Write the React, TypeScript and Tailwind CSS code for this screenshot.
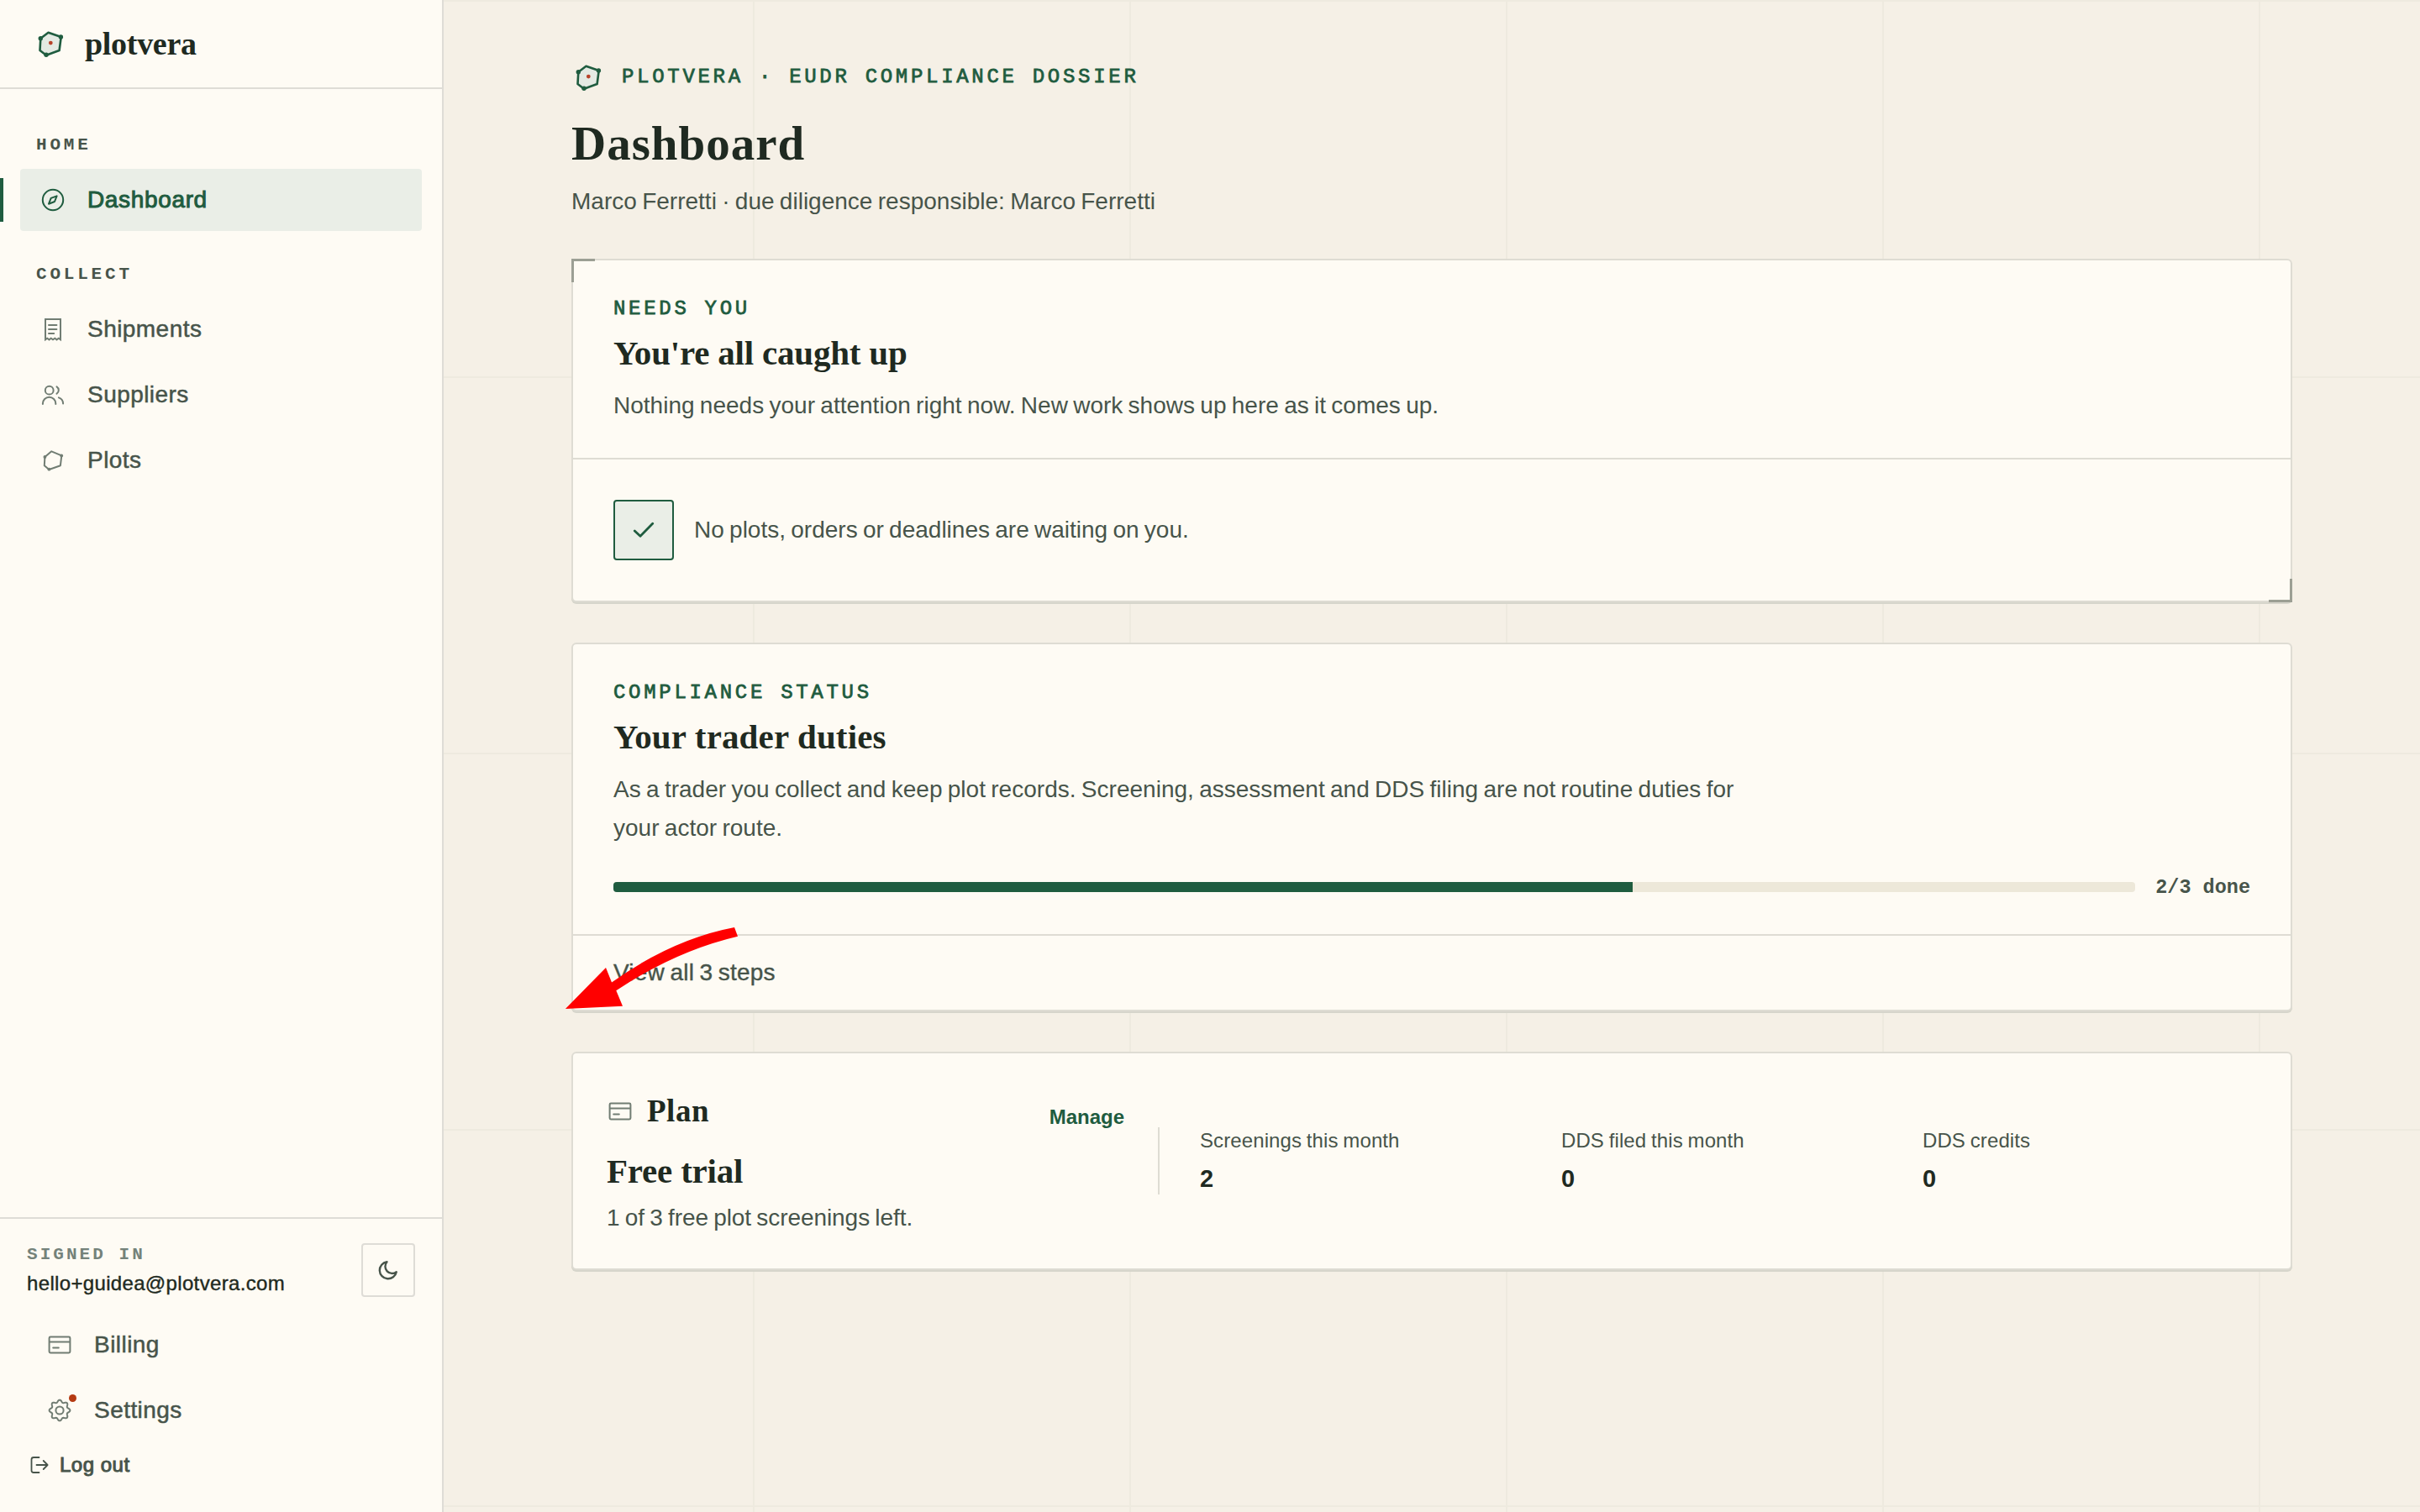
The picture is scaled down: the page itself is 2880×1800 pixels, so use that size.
import type { ReactNode } from "react";

function Logo() {
  return (
    <svg viewBox="0 0 32 32" className="size-8 shrink-0">
      <path
        d="M13.5 2.7 28.7 8 26.6 24 11 29.7 3.5 24 4.3 9.7Z"
        fill="#e4eae3"
        stroke="#1f5c3f"
        strokeWidth="2.6"
        strokeLinejoin="round"
      />
      <circle cx="4.3" cy="9.7" r="2.7" fill="#1f5c3f" />
      <circle cx="28.4" cy="8" r="2.7" fill="#1f5c3f" />
      <circle cx="11" cy="29.2" r="2.7" fill="#1f5c3f" />
      <circle cx="16.3" cy="15.1" r="2.4" fill="#b8432a" />
    </svg>
  );
}

function Icon({ children, className = "" }: { children: ReactNode; className?: string }) {
  return (
    <svg
      viewBox="0 0 32 32"
      fill="none"
      stroke="currentColor"
      strokeWidth="2"
      strokeLinecap="round"
      strokeLinejoin="round"
      className={`size-8 shrink-0 ${className}`}
    >
      {children}
    </svg>
  );
}

const CompassIcon = () => (
  <>
    <circle cx="16" cy="16" r="12.2" />
    <path d="M20.6 11.4 18 18 11 20.7 13.7 13.9Z" />
  </>
);

const ReceiptIcon = () => (
  <path
    d="M7 28.4V3.9h18v24.5l-2.2-1.6-2.3 1.6-2.2-1.6-2.3 1.6-2.3-1.6-2.2 1.6-2.3-1.6ZM11 11.1h9.4M11 15.9h9.4M11 20.9h6.2"
    strokeLinejoin="miter"
  />
);

const UsersIcon = () => (
  <path d="M6.8 10.7a4.9 4.9 0 1 0 9.8 0a4.9 4.9 0 1 0-9.8 0M3.9 26.9v-.4a7.7 7.7 0 0 1 15.4 0v.4M20.5 6.4a4.9 4.9 0 0 1 0 8.3M22.9 19.4a7.7 7.7 0 0 1 5.2 7.2" />
);

const PlotIcon = () => (
  <>
    <path d="M14.3 5.3 26.3 10.4 24.9 22.2 11.4 27 5.8 22.2 6.4 12Z" />
    <g fill="currentColor" stroke="none">
      <circle cx="6.4" cy="12" r="1.9" />
      <circle cx="26.2" cy="10.4" r="1.9" />
      <circle cx="11.4" cy="26.7" r="1.9" />
    </g>
  </>
);

const CardIcon = () => (
  <path d="M5 6.6h22q1.4 0 1.4 1.4v16q0 1.4-1.4 1.4H5Q3.6 25.4 3.6 24V8Q3.6 6.6 5 6.6ZM3.6 12.6h24.8M8.2 19.5h6.6" />
);

const gearPath =
  Array.from({ length: 96 }, (_, i) => {
    const a = (i / 96) * Math.PI * 2;
    const r = 11 + 1.4 * Math.cos(8 * a);
    return `${i ? "L" : "M"}${(16 + r * Math.cos(a)).toFixed(2)} ${(16 + r * Math.sin(a)).toFixed(2)}`;
  }).join("") + "Z";

const GearIcon = () => (
  <>
    <path d={gearPath} />
    <circle cx="16" cy="16" r="4.6" />
  </>
);

function NavItem({ icon, label, active, dot }: { icon: ReactNode; label: string; active?: boolean; dot?: boolean }) {
  return (
    <div
      className={
        active
          ? "relative flex h-[74px] items-center gap-[25px] rounded-[4px] bg-[#eaeee7] pl-[23px] text-[#1f5c3f]"
          : "relative flex h-[74px] items-center gap-[25px] pl-[23px] text-[#47544a]"
      }
    >
      {active && <span className="absolute top-[11px] -left-6 h-[52px] w-1 bg-[#1f5c3f]" />}
      <span className={active ? "relative" : "relative text-[#717d73]"}>
        <Icon className="block">{icon}</Icon>
        {dot && <span className="absolute -top-[3px] -right-[4px] size-[9px] rounded-full bg-[#b53a12]" />}
      </span>
      <span
        className={
          active
            ? "text-[28px] tracking-[0.65px] [-webkit-text-stroke:1px]"
            : "text-[28px] tracking-[0.45px] [-webkit-text-stroke:0.5px]"
        }
      >
        {label}
      </span>
    </div>
  );
}

function NavHeading({ children }: { children: ReactNode }) {
  return (
    <div className="pl-[43px] font-['Liberation_Mono',monospace] text-[21px] leading-[28px] font-bold tracking-[3.8px] text-[#47544a]">
      {children}
    </div>
  );
}

function Eyebrow({ children }: { children: ReactNode }) {
  return (
    <div className="font-['Liberation_Mono',monospace] text-[24px] leading-9 tracking-[3.7px] text-[#1f5c3f] [-webkit-text-stroke:0.8px]">
      {children}
    </div>
  );
}

function Heading({ children, className = "tracking-[-0.2px]" }: { children: ReactNode; className?: string }) {
  return (
    <h2 className={`font-['Liberation_Serif',serif] text-[41px] leading-[48px] font-bold text-[#1f2a21] ${className}`}>
      {children}
    </h2>
  );
}

const cardClass = "relative rounded-[6px] border-2 border-[#dedcd3] bg-[#fefbf4] shadow-[0_2px_0_#d6d5cb]";

const stats = [
  ["Screenings this month", "2"],
  ["DDS filed this month", "0"],
  ["DDS credits", "0"],
];

export default function App() {
  return (
    <div className="relative flex h-[1800px] w-[2880px] overflow-hidden bg-[#f5f0e6] bg-[linear-gradient(to_right,#eeeadf_2px,transparent_2px),linear-gradient(to_bottom,#eeeadf_2px,transparent_2px)] bg-[size:448px_448px] font-['Liberation_Sans',sans-serif]">
      <aside className="flex w-[528px] shrink-0 flex-col border-r-2 border-[#dedcd6] bg-[#fefbf4]">
        <div className="flex h-[106px] items-center gap-[25px] border-b-2 border-[#dedcd6] pl-11">
          <Logo />
          <span className="font-['Liberation_Serif',serif] text-[38px] leading-[48px] font-bold tracking-[-0.3px] text-[#1f2a21]">
            plotvera
          </span>
        </div>
        <nav className="flex-1 pt-[53px]">
          <NavHeading>HOME</NavHeading>
          <div className="mx-6 mt-[14px]">
            <NavItem icon={<CompassIcon />} label="Dashboard" active />
          </div>
          <div className="mt-[38px]">
            <NavHeading>COLLECT</NavHeading>
          </div>
          <div className="mx-6 mt-[14px] flex flex-col gap-1">
            <NavItem icon={<ReceiptIcon />} label="Shipments" />
            <NavItem icon={<UsersIcon />} label="Suppliers" />
            <NavItem icon={<PlotIcon />} label="Plots" />
          </div>
        </nav>
        <div className="h-[351px] border-t-2 border-[#dedcd6] px-8 pt-[29px]">
          <div className="flex justify-between">
            <div>
              <div className="font-['Liberation_Mono',monospace] text-[21px] leading-[28px] font-bold tracking-[3.05px] text-[#74827a]">
                SIGNED IN
              </div>
              <div className="mt-[3px] text-[24px] leading-[34px] tracking-[0.34px] text-[#1f2a21] [-webkit-text-stroke:0.4px]">
                hello+guidea@plotvera.com
              </div>
            </div>
            <div className="flex size-16 items-center justify-center rounded-[4px] border-2 border-[#dedcd6] text-[#47544a]">
              <svg viewBox="0 0 24 24" fill="none" stroke="currentColor" strokeWidth="2.2" strokeLinejoin="round" className="size-[26px]">
                <path d="M21 14A9.3 9.3 0 1 1 10.6 3 7.6 7.6 0 0 0 21 14Z" />
              </svg>
            </div>
          </div>
          <div className="mt-[19px] flex flex-col gap-1">
            <NavItem icon={<CardIcon />} label="Billing" />
            <NavItem icon={<GearIcon />} label="Settings" dot />
          </div>
          <div className="mt-2 flex h-10 items-center gap-[11px] text-[#47544a]">
            <svg
              viewBox="0 0 28 28"
              fill="none"
              stroke="currentColor"
              strokeWidth="1.8"
              strokeLinecap="round"
              strokeLinejoin="round"
              className="size-7"
            >
              <path d="M14.5 5H8Q5.5 5 5.5 7.5V20.5Q5.5 23 8 23H14.5M11.5 14H24.5M19.7 9 24.6 14 19.7 19" />
            </svg>
            <span className="text-[24px] tracking-[0.5px] [-webkit-text-stroke:1px]">Log out</span>
          </div>
        </div>
      </aside>

      <main className="ml-[152px] flex w-[2048px] flex-col pt-[73px]">
        <header className="h-[235px]">
          <div className="-mt-px flex h-10 items-center gap-6 pl-1">
            <Logo />
            <Eyebrow>PLOTVERA · EUDR COMPLIANCE DOSSIER</Eyebrow>
          </div>
          <h1 className="mt-[27px] font-['Liberation_Serif',serif] text-[57px] leading-[64px] font-bold tracking-[1px] text-[#1f2a21]">
            Dashboard
          </h1>
          <p className="mt-[15px] text-[28px] leading-[44px] tracking-[0.01px] [word-spacing:-1.500px] text-[#47544a]">
            Marco Ferretti · due diligence responsible: Marco Ferretti
          </p>
        </header>

        <div className="flex flex-col gap-12">
          <section className={`h-[409px] ${cardClass}`}>
            <span className="absolute -top-[2px] -left-[2px] size-7 border-t-[3px] border-l-[3px] border-[#9c9f94]" />
            <span className="absolute -right-[2px] -bottom-[2px] size-7 border-r-[3px] border-b-[3px] border-[#9c9f94]" />
            <div className="h-[237px] border-b-2 border-[#dedcd3] px-12 pt-10">
              <Eyebrow>NEEDS YOU</Eyebrow>
              <div className="mt-[10px]">
                <Heading>You're all caught up</Heading>
              </div>
              <p className="mt-[17px] text-[28px] leading-[44px] tracking-[0.01px] [word-spacing:-1.500px] text-[#47544a]">
                Nothing needs your attention right now. New work shows up here as it comes up.
              </p>
            </div>
            <div className="flex h-[168px] items-center gap-6 px-12">
              <div className="flex size-[72px] items-center justify-center rounded-[4px] border-2 border-[#1f5c3f] bg-[#eaeee7] text-[#1f5c3f]">
                <svg viewBox="0 0 32 32" fill="none" stroke="currentColor" strokeWidth="2.8" strokeLinecap="round" strokeLinejoin="round" className="size-8">
                  <path d="M5.300 17 12 23.300 26.700 8.300" />
                </svg>
              </div>
              <span className="text-[28px] [word-spacing:-1.500px] text-[#47544a]">
                No plots, orders or deadlines are waiting on you.
              </span>
            </div>
          </section>

          <section className={`h-[439px] ${cardClass}`}>
            <div className="h-[347px] border-b-2 border-[#dedcd3] px-12 pt-10">
              <Eyebrow>COMPLIANCE STATUS</Eyebrow>
              <div className="mt-[10px]">
                <Heading className="tracking-[0.15px]">Your trader duties</Heading>
              </div>
              <p className="mt-4 w-[1344px] text-[28px] leading-[45.5px] tracking-[0.015px] [word-spacing:-1.500px] text-[#47544a]">
                As a trader you collect and keep plot records. Screening, assessment and DDS filing are not routine duties for
                your actor route.
              </p>
              <div className="mt-7 flex h-10 items-center gap-6">
                <div className="h-3 flex-1 overflow-hidden rounded-[4px] bg-[#ede8d9]">
                  <div className="h-full w-[67%] bg-[#1f5c3f]" />
                </div>
                <span className="pt-0.5 font-['Liberation_Mono',monospace] text-[23.5px] font-bold text-[#47544a]">2/3 done</span>
              </div>
            </div>
            <div className="flex h-[88px] items-center px-12 text-[28px] tracking-[0.2px] [word-spacing:-1.500px] text-[#47544a] [-webkit-text-stroke:0.400px]">
              View all 3 steps
            </div>
          </section>

          <section className={`flex h-[260px] ${cardClass}`}>
            <div className="w-[656px] pt-[47px] pl-10">
              <div className="flex h-11 items-center">
                <Icon className="-mt-px text-[#717d73]">
                  <CardIcon />
                </Icon>
                <span className="ml-[16px] font-['Liberation_Serif',serif] text-[37px] font-bold tracking-[0.5px] text-[#1f2a21]">
                  Plan
                </span>
                <span className="mt-[13px] ml-auto text-[24px] font-bold text-[#1f5c3f]">Manage</span>
              </div>
              <div className="mt-[25px]">
                <Heading>Free trial</Heading>
              </div>
              <p className="mt-[10px] text-[28px] leading-[44px] tracking-[-0.060px] [word-spacing:-1.500px] text-[#47544a]">
                1 of 3 free plot screenings left.
              </p>
            </div>
            <div className="mt-[88px] ml-10 grid h-20 flex-1 grid-cols-[430px_430px_430px] border-l-2 border-[#dedcd3] pl-12">
              {stats.map(([label, value]) => (
                <div key={label}>
                  <div className="text-[24px] leading-[32px] tracking-[0.100px] [word-spacing:-1px] text-[#47544a]">{label}</div>
                  <div className="mt-[11px] text-[29px] leading-9 font-bold text-[#1f2a21]">{value}</div>
                </div>
              ))}
            </div>
          </section>
        </div>
      </main>

      <svg viewBox="0 0 210 102" className="pointer-events-none absolute top-[1102px] left-[670px] h-[102px] w-[210px]" fill="#ff0000">
        <path d="M2.900 99 51 50 58 67.500Q130 16 204 2L208 12.700Q134 30 63.300 77.300L71 95.800Z" />
      </svg>
    </div>
  );
}
